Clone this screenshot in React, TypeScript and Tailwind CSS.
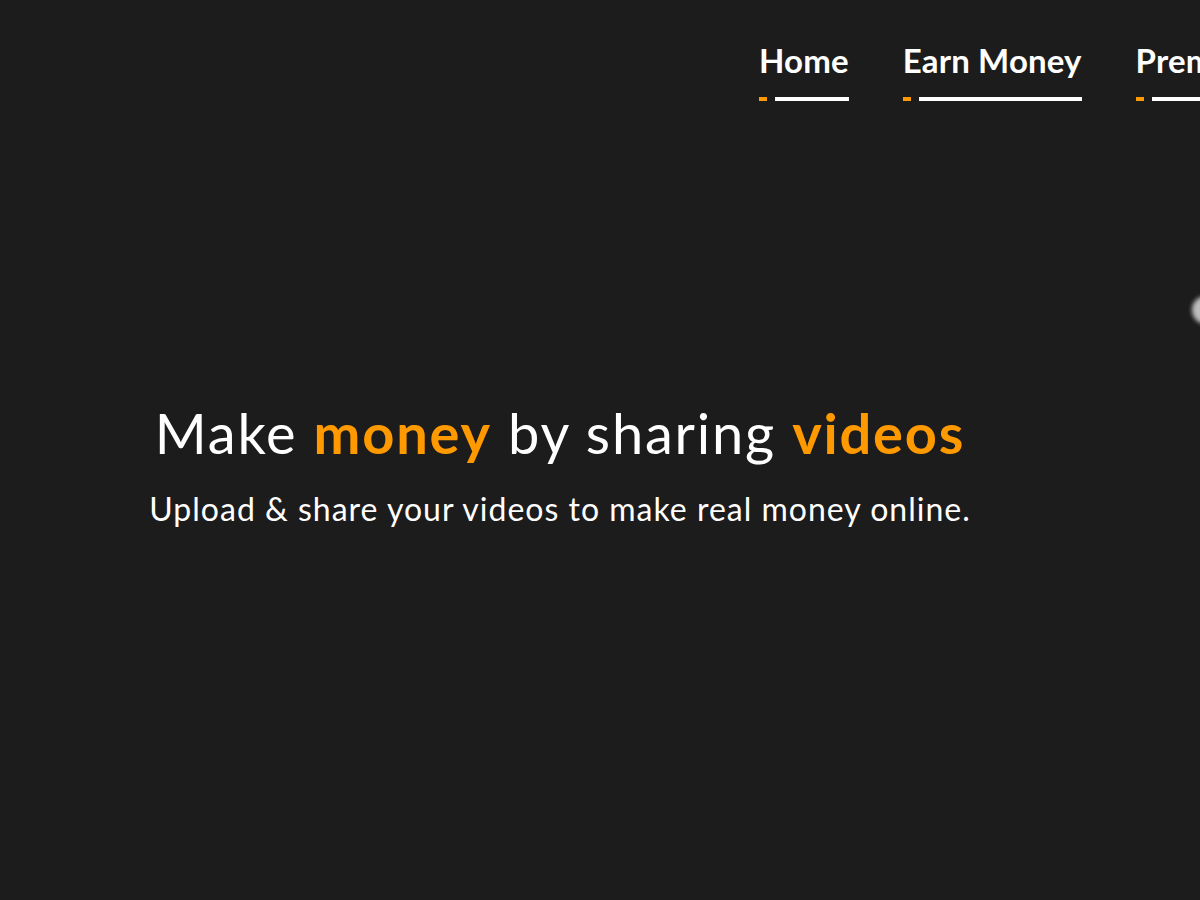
export default function App() {
  const nav = ["Home", "Earn Money", "Premium"];
  return (
    <div
      className="relative w-[1200px] h-[900px] overflow-hidden bg-[#1c1c1c] text-white"
      style={{ fontFamily: "Lato, 'Open Sans', sans-serif" }}
    >
      <nav className="flex gap-[54px] pl-[759px] pt-[40px] whitespace-nowrap">
        {nav.map((n) => (
          <div key={n} className="flex flex-col">
            <span className="text-[33px] leading-[40px] font-bold tracking-[0.15px]">{n}</span>
            <div className="flex items-center gap-[8px] mt-[17px]">
              <span className="w-[8px] h-[4px] bg-[#ff9900]" />
              <span className="flex-1 h-[4px] bg-white" />
            </div>
          </div>
        ))}
      </nav>
      <div className="absolute left-[1192px] top-[296px] w-[28px] h-[28px] rounded-full bg-[#bdbdbd] blur-[2px]" />
      <section className="w-[1120px] flex flex-col items-center mt-[300px]">
        <h1 className="text-[56px] leading-[64px] font-normal tracking-[1.8px] whitespace-nowrap">
          Make <span className="text-[#ff9900] font-bold">money</span> by sharing{" "}
          <span className="text-[#ff9900] font-bold">videos</span>
        </h1>
        <p className="text-[32px] leading-[40px] mt-[24px] tracking-[1px] whitespace-nowrap">
          Upload &amp; share your videos to make real money online.
        </p>
      </section>
    </div>
  );
}
